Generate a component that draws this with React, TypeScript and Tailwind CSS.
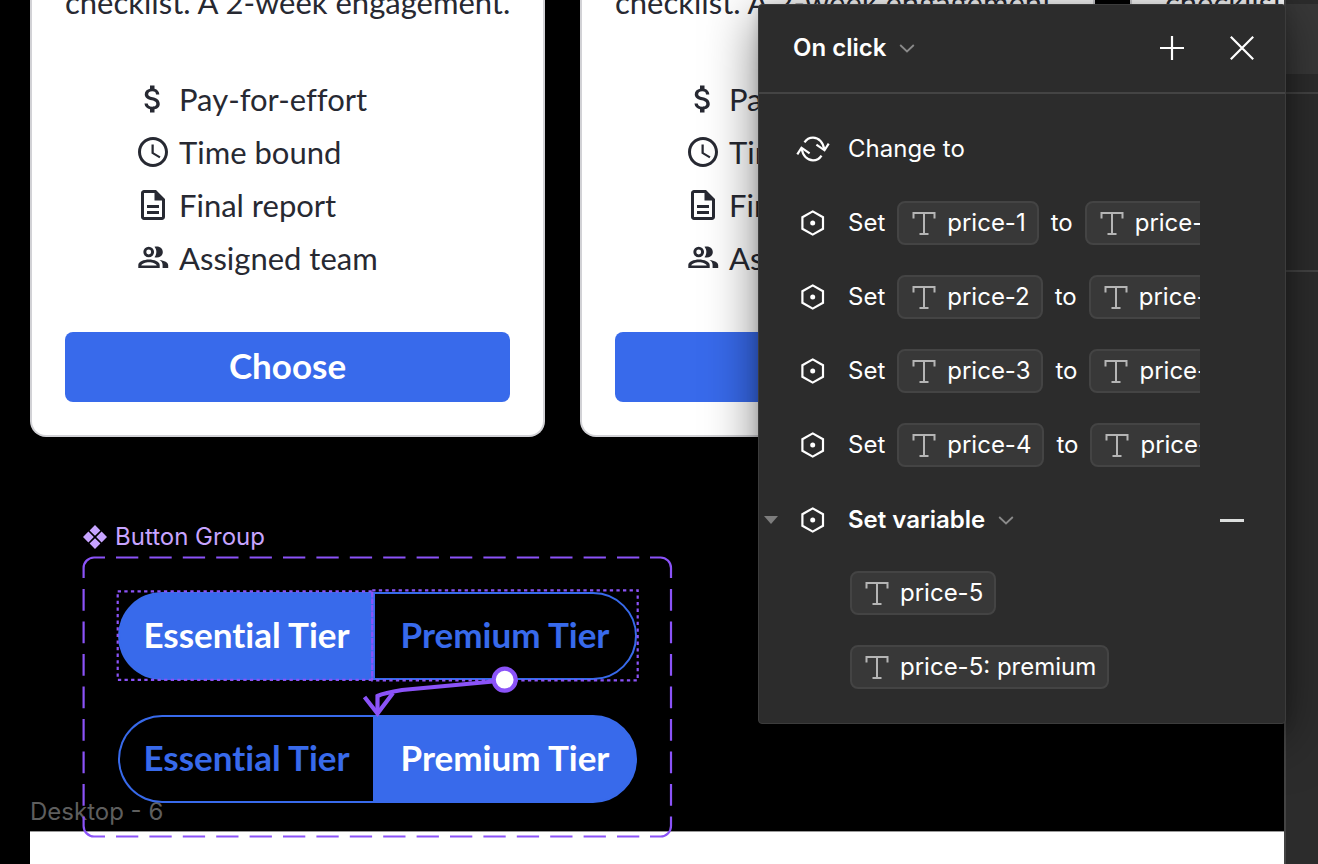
// ============================================================================
// PROTOTYPE EDITOR — canvas with pricing cards and the interaction panel
// ============================================================================

import React, { memo, useState } from 'react';
import { MdAttachMoney, MdOutlineDescription, MdSchedule } from 'react-icons/md';

// Types
interface Feature {
  label: string;
  Icon: React.ComponentType<{ className?: string }>;
}

interface SetAction {
  id: number;
  variable: string;
  value: string;
}

type Tier = 'essential' | 'premium';

// Icons
const PeopleIcon: React.FC<{ className?: string }> = ({ className }) => (
  <svg className={className} viewBox="0 0 36 36" fill="currentColor" aria-hidden="true">
    <circle cx="13.700" cy="12" r="3.900" fill="none" stroke="currentColor" strokeWidth="2.900" />
    <path d="M19.500 6.800C24.500 5.600 27.800 8.400 27.800 12S24.500 18.400 19.500 17.200C22 14 22 10 19.500 6.800Z" />
    <path
      fillRule="evenodd"
      d="M3.300 28V25C3.300 21.600 9 19.500 14 19.500S24.700 21.600 24.700 25V28ZM6.300 25.600H21.700C21.300 23.600 17.500 22.300 14 22.300S6.700 23.600 6.300 25.600Z"
    />
    <path d="M24.500 20C29.500 20.600 33.200 22.600 33.200 25.200V28H27.600V25C27.600 22.800 26.500 21.200 24.500 20Z" />
  </svg>
);

const ChevronIcon = () => (
  <svg className="h-4 w-4" viewBox="0 0 16 16" fill="none" stroke="#8a8a8a" strokeWidth="1.800" aria-hidden="true">
    <path d="M1.200 5 8 11.500 14.800 5" />
  </svg>
);

const SwapIcon = () => (
  <svg className="h-7 w-[34px]" viewBox="0 0 34 28" fill="none" stroke="#fff" strokeWidth="2.200" aria-hidden="true">
    <path d="M8.500 7.400C10.500 4.200 13.500 2.600 17 2.600c5.800 0 10.500 4.800 11.300 12.200" />
    <path d="M20.400 9.600 28.500 15.300 32.700 8.600" />
    <path d="M25.500 20.600C23.500 23.800 20.500 25.400 17 25.400c-5.800 0-10.500-4.800-11.300-12.200" />
    <path d="M13.600 18.400 5.500 12.700 1.300 19.400" />
  </svg>
);

const HexagonIcon = () => (
  <svg className="h-[26px] w-6" viewBox="0 0 24 26" fill="none" aria-hidden="true">
    <path d="M11.700 1.400 22 7.200V18.800L11.700 24.600 1.400 18.800V7.200Z" stroke="#fff" strokeWidth="2.200" />
    <circle cx="11.700" cy="13" r="2.500" fill="#fff" />
  </svg>
);

const TextTypeIcon = () => (
  <svg className="h-6 w-6 shrink-0" viewBox="0 0 24 24" fill="none" stroke="#b5b5b5" strokeWidth="2" aria-hidden="true">
    <path d="M1.500 7.500V2H22.500V7.500M12 2V23M7.500 23H16.500" />
  </svg>
);

const ComponentIcon = () => (
  <svg className="h-6 w-6" viewBox="0 0 24 24" fill="#c7a4ff" aria-hidden="true">
    <path d="M12 0 17.400 5.400 12 10.800 6.600 5.400ZM5.400 6.600 10.800 12 5.400 17.400 0 12ZM18.600 6.600 24 12 18.600 17.400 13.200 12ZM12 13.200 17.400 18.600 12 24 6.600 18.600Z" />
  </svg>
);

const FEATURES: Feature[] = [
  { label: 'Pay-for-effort', Icon: MdAttachMoney },
  { label: 'Time bound', Icon: MdSchedule },
  { label: 'Final report', Icon: MdOutlineDescription },
  { label: 'Assigned team', Icon: PeopleIcon },
];

const SET_ACTIONS: SetAction[] = [
  { id: 1, variable: 'price-1', value: 'price-1: premium' },
  { id: 2, variable: 'price-2', value: 'price-2: premium' },
  { id: 3, variable: 'price-3', value: 'price-3: premium' },
  { id: 4, variable: 'price-4', value: 'price-4: premium' },
];

// Pricing card, only its lower half is in view
const PricingCard = memo(() => (
  <article className="w-[515px] shrink-0 rounded-b-2xl border-2 border-t-0 border-[#d2d2d6] bg-white px-[33px] pb-[33px] font-[Lato,sans-serif] text-[31px] text-[#272932] [font-variant-ligatures:none]">
    <p className="-mt-[18px] whitespace-nowrap leading-10">checklist. A 2-week engagement.</p>
    <ul className="mt-[59px] flex flex-col gap-[17px] pl-[70px]">
      {FEATURES.map(({ label, Icon }) => (
        <li key={label} className="flex h-9 items-center gap-2 whitespace-nowrap leading-9">
          <Icon className="h-9 w-9" />
          {label}
        </li>
      ))}
    </ul>
    <button className="mt-14 h-[70px] w-full rounded-lg bg-[#386aeb] pb-1 text-[35px] font-bold text-white">
      Choose
    </button>
  </article>
));

PricingCard.displayName = 'PricingCard';

// Two-segment tier switch
const TierSwitch: React.FC<{ active: Tier }> = memo(({ active }) => {
  const on = 'bg-[#386aeb] text-white';
  const off = 'text-[#386aeb]';

  return (
    <div className="flex h-[88px] w-[519px] whitespace-nowrap font-[Lato,sans-serif] text-[35px] font-bold [font-variant-ligatures:none]">
      <button className={`w-[255px] rounded-l-full border-2 border-r-0 border-[#386aeb] pb-1 ${active === 'essential' ? on : off}`}>
        Essential Tier
      </button>
      <button className={`flex-1 rounded-r-full border-2 border-[#386aeb] pb-1 ${active === 'premium' ? on : off}`}>
        Premium Tier
      </button>
    </div>
  );
});

TierSwitch.displayName = 'TierSwitch';

// Dashed bounds, selection outlines and the prototype connector
const ComponentOverlay = () => (
  <svg
    className="pointer-events-none absolute inset-0 h-full w-full"
    viewBox="0 0 592 284"
    fill="none"
    stroke="#8b53f8"
    strokeWidth="2.200"
    aria-hidden="true"
  >
    <path d="M1.600 22V12A10.500 10.500 0 0 1 12 1.500H23M568 1.500H578.500A10.500 10.500 0 0 1 589 12V22M589 261V270A10.500 10.500 0 0 1 578.500 280.500H568M23 280.500H12A10.500 10.500 0 0 1 1.600 270V261" />
    <path d="M34 1.500H568M34 280.500H568" strokeDasharray="22.300 11.100" />
    <path d="M1.600 33V261M589 33V261" strokeDasharray="21.700 10.800" />
    <g strokeWidth="2.200" strokeDasharray="3.300 3.300">
      <rect x="35.700" y="35.300" width="254.500" height="88.500" />
      <rect x="290.200" y="34.300" width="265.500" height="90" />
    </g>
    <g strokeWidth="4.200">
      <path d="M422 124.500 320 134C308 136 300 138 295.500 140V157" />
      <path d="M282.500 141 295.500 157.500 311 137" />
      <circle cx="422.700" cy="123.700" r="11" fill="#fff" />
    </g>
  </svg>
);

// Variable pill
const VariableChip: React.FC<{ name: string }> = memo(({ name }) => (
  <button className="flex h-11 shrink-0 items-center gap-[11px] rounded-lg border-2 border-[#444444] bg-[#383838] pl-[13px] pr-[11px]">
    <TextTypeIcon />
    {name}
  </button>
));

VariableChip.displayName = 'VariableChip';

// Interaction panel
const InteractionPanel = memo(() => {
  const [expanded, setExpanded] = useState(true);

  return (
    <section
      aria-label="Interaction"
      className="absolute right-8 top-1 w-[528px] rounded border border-[#3c3c3c] bg-[#2c2c2c] pb-[34px] font-[Inter,sans-serif] text-[24px] leading-8 text-white shadow-[0_12px_52px_rgba(0,0,0,0.5),0_2px_12px_rgba(0,0,0,0.15)]"
    >
      {/* Header */}
      <header className="flex h-[89px] items-center border-b-2 border-[#444444] pb-px pl-[34px] pr-[31px]">
        <select aria-label="Trigger" className="appearance-none font-semibold">
          <option>On click</option>
        </select>
        <span className="ml-3 mr-auto">
          <ChevronIcon />
        </span>
        <button aria-label="Add action" className="mr-[46px]">
          <svg className="h-6 w-6" viewBox="0 0 24 24" stroke="#fff" strokeWidth="2.200">
            <path d="M12 0V24M0 12H24" />
          </svg>
        </button>
        <button aria-label="Close">
          <svg className="h-6 w-6" viewBox="0 0 24 24" stroke="#fff" strokeWidth="2.200">
            <path d="M.8 .8 23.200 23.200M23.200 .8 .8 23.200" />
          </svg>
        </button>
      </header>

      {/* Actions */}
      <ul className="pt-[18px]">
        <li className="flex h-[74px] items-center gap-[18px] pl-[37px]">
          <SwapIcon />
          Change to
        </li>
        {SET_ACTIONS.map((action) => (
          <li key={action.id} className="flex h-[74px] items-center gap-[18px] pl-[37px] pr-[85px]">
            <span className="flex w-[34px] shrink-0 justify-center">
              <HexagonIcon />
            </span>
            <div className="flex min-w-0 flex-1 items-center gap-3 overflow-hidden whitespace-nowrap">
              <span>Set</span>
              <VariableChip name={action.variable} />
              <span>to</span>
              <VariableChip name={action.value} />
            </div>
          </li>
        ))}
        <li>
          <div className="flex h-[76px] items-center pl-[5px] pr-[41px]">
            <button aria-label="Toggle action" aria-expanded={expanded} onClick={() => setExpanded(!expanded)} className="w-8">
              <svg className="h-2 w-[14px]" viewBox="0 0 14 8" fill="#7d7d7d">
                <path d="M0 0H14L7 8Z" />
              </svg>
            </button>
            <span className="mr-[18px] flex w-[34px] justify-center">
              <HexagonIcon />
            </span>
            <select aria-label="Action type" className="appearance-none font-semibold">
              <option>Set variable</option>
            </select>
            <span className="ml-3 mr-auto">
              <ChevronIcon />
            </span>
            <button aria-label="Remove action" className="py-3">
              <span className="block h-[3px] w-6 bg-[#dcdedd]" />
            </button>
          </div>
          {expanded && (
            <div className="flex flex-col items-start gap-[30px] pl-[91px] pt-[13px]">
              <VariableChip name="price-5" />
              <VariableChip name="price-5: premium" />
            </div>
          )}
        </li>
      </ul>
    </section>
  );
});

InteractionPanel.displayName = 'InteractionPanel';

export const App: React.FC = () => {
  return (
    <div className="relative flex h-screen overflow-hidden bg-black">
      {/* Canvas */}
      <main className="relative min-w-0 flex-1 overflow-hidden">
        <div className="flex gap-[35px] pl-[30px]">
          <PricingCard />
          <PricingCard />
          <PricingCard />
        </div>

        <div className="absolute bottom-0 left-[30px] right-0 top-[796px] flex flex-col font-[Inter,sans-serif] text-[24px]">
          <span className="h-[35px] leading-8 text-[#5e5e5e]">Desktop - 6</span>
          <div className="flex-1 border-t border-[#999999] bg-white" />
        </div>

        <div className="absolute left-[82px] top-[522px]">
          <div className="flex h-[34px] items-center gap-2 pb-1 pl-px font-[Inter,sans-serif] text-[24px] leading-8 text-[#c7a4ff]">
            <ComponentIcon />
            Button Group
          </div>
          <div className="relative flex h-[284px] w-[592px] flex-col gap-[35px] pl-9 pt-9">
            <TierSwitch active="essential" />
            <TierSwitch active="premium" />
            <ComponentOverlay />
          </div>
        </div>
      </main>

      {/* Properties sidebar */}
      <aside className="w-[34px] border-l-2 border-[#444444] bg-[#2c2c2c] pt-1">
        <div className="h-[70px] bg-[#383838]" />
        <div className="h-5 border-b-2 border-[#444444]" />
        <div className="h-[178px] border-b-2 border-[#444444]" />
      </aside>

      <InteractionPanel />
    </div>
  );
};

export default App;
